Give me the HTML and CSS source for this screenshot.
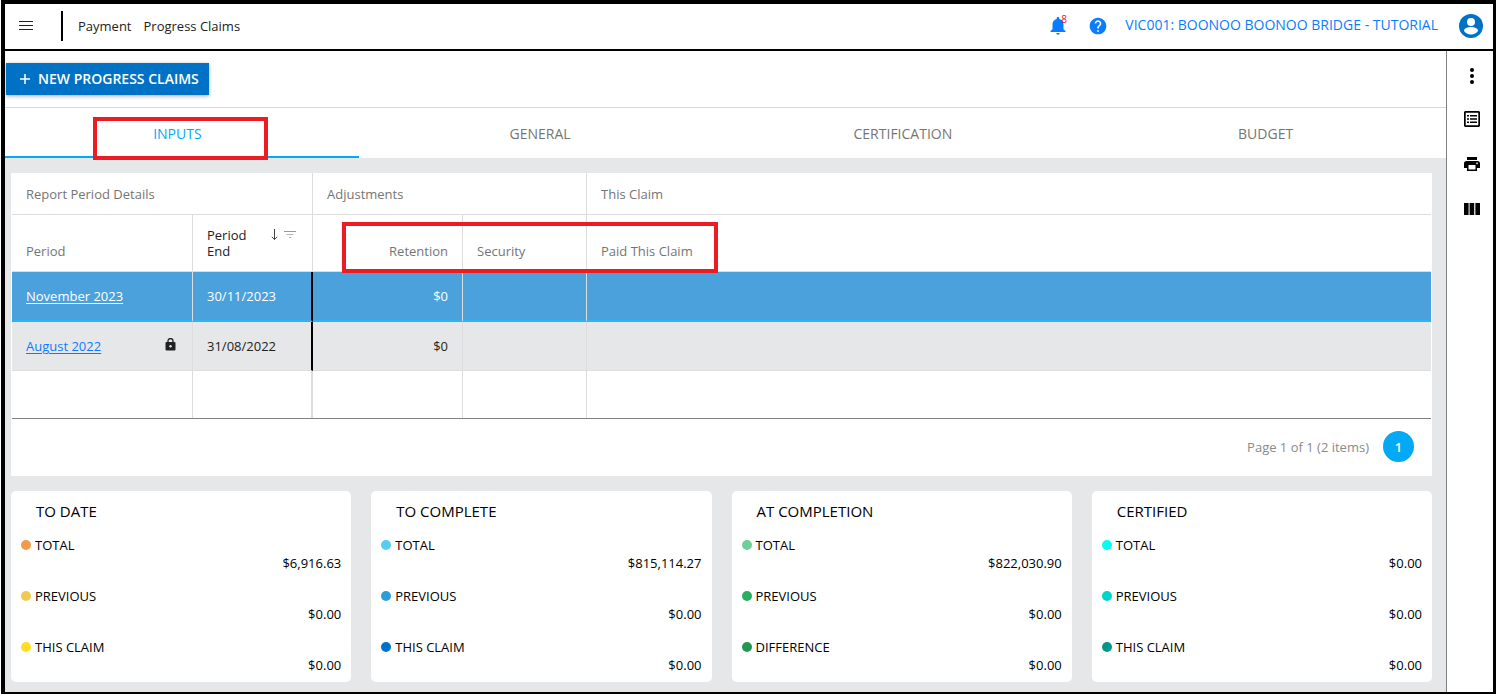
FILE: index.html
```html
<!DOCTYPE html>
<html lang="en">
    <head>
        <meta charset="utf-8">
        <title>Progress Claims</title>
        <link rel="stylesheet" href="styles.css">
    </head>
    <body>
        <div id="app">
            <header class="header">
                <button class="icon-button menu" aria-label="Menu">
                    <svg width="14" height="10" viewBox="0 0 14 10" stroke="#222"><path d="M0 .5h14M0 4.500h14M0 8.500h14"/></svg>
                </button>
                <nav class="crumbs">
                    <a href="#">Payment</a>
                    <a href="#">Progress Claims</a>
                </nav>
                <button class="icon-button bell" aria-label="Notifications">
                    <svg width="16" height="18" viewBox="0 0 16 18" fill="#0a7cff"><path d="M8 0c-.8 0-1.300.500-1.300 1.300v.6C4 2.500 2.500 4.600 2.500 7.200v5L.5 14v1h15v-1l-2-1.800v-5c0-2.600-1.500-4.700-4.200-5.300v-.6C9.300.500 8.800 0 8 0zM6.300 16c0 1 .8 1.700 1.700 1.700s1.700-.7 1.700-1.700z"/></svg>
                    <span class="badge">8</span>
                </button>
                <button class="icon-button help" aria-label="Help">
                    <svg width="20" height="20" viewBox="0 0 24 24" fill="#0a7cff"><path d="M12 2C6.480 2 2 6.480 2 12s4.480 10 10 10 10-4.480 10-10S17.520 2 12 2zm1 17h-2v-2h2v2zm2.070-7.750l-.9.920C13.450 12.900 13 13.500 13 15h-2v-.5c0-1.100.45-2.100 1.170-2.830l1.240-1.260c.37-.36.59-.86.590-1.410 0-1.100-.9-2-2-2s-2 .9-2 2H8c0-2.210 1.790-4 4-4s4 1.790 4 4c0 .88-.36 1.680-.93 2.250z"/></svg>
                </button>
                <a class="project" href="#">VIC001: BOONOO BOONOO BRIDGE - TUTORIAL</a>
                <button class="icon-button user" aria-label="Account">
                    <svg width="24" height="24" viewBox="0 0 24 24"><circle cx="12" cy="12" r="12" fill="#0072c6"/><circle cx="12" cy="8" r="4" fill="#fff"/><path d="M5 17c0-3 4-4 7-4s7 1 7 4c-1.500 2.200-4 3.500-7 3.500S6.500 19.200 5 17z" fill="#fff"/></svg>
                </button>
            </header>
            <div class="body">
                <main class="main">
                    <div class="toolbar">
                        <button class="new-claim">
                            <svg width="10" height="10" viewBox="0 0 10 10" stroke="#fff" stroke-width="1.500"><path d="M5 0v10M0 5h10"/></svg>
                            NEW PROGRESS CLAIMS
                        </button>
                    </div>
                    <div class="tabs" role="tablist">
                        <button class="tab active" role="tab" aria-selected="true">INPUTS<span class="mark mark-tab"></span></button>
                        <button class="tab" role="tab">GENERAL</button>
                        <button class="tab" role="tab">CERTIFICATION</button>
                        <button class="tab" role="tab">BUDGET</button>
                    </div>
                    <div class="content">
                        <section class="grid">
                            <table>
                                <colgroup>
                                    <col class="col-period">
                                    <col class="col-end">
                                    <col class="col-retention">
                                    <col class="col-security">
                                    <col>
                                </colgroup>
                                <thead>
                                    <tr class="bands">
                                        <th colspan="2">Report Period Details</th>
                                        <th colspan="2">Adjustments</th>
                                        <th>This Claim</th>
                                    </tr>
                                    <tr class="columns">
                                        <th>Period</th>
                                        <th class="sorted">
                                            <div class="sort-head">
                                                <span>Period End</span>
                                                <svg width="8" height="12" viewBox="0 0 8 12" fill="none" stroke="#444"><path d="M3.500 0v10.500M.8 7.800l2.700 2.700 2.700-2.700"/></svg>
                                                <svg width="12" height="8" viewBox="0 0 12 8"><path d="M0 .5h12" stroke="#999"/><path d="M2.500 3.500h7M5 6.500h2" stroke="#b5b5b5"/></svg>
                                            </div>
                                        </th>
                                        <th class="num">Retention</th>
                                        <th>Security</th>
                                        <th>Paid This Claim</th>
                                    </tr>
                                </thead>
                                <tbody>
                                    <tr class="selected">
                                        <td><a href="#">November 2023</a></td>
                                        <td class="fixed">30/11/2023</td>
                                        <td class="num">$0</td>
                                        <td></td>
                                        <td></td>
                                    </tr>
                                    <tr class="locked">
                                        <td>
                                            <div class="period">
                                                <a href="#">August 2022</a>
                                                <svg width="13" height="14" viewBox="0 0 13 14"><path d="M3 5V3a2.500 2.500 0 0 1 5 0v2" fill="none" stroke="#222" stroke-width="1.300"/><rect x=".5" y="4" width="10" height="8.500" rx="1" fill="#222"/><circle cx="5.500" cy="8.200" r="1.200" fill="#e6e7e9"/></svg>
                                            </div>
                                        </td>
                                        <td class="fixed">31/08/2022</td>
                                        <td class="num">$0</td>
                                        <td></td>
                                        <td></td>
                                    </tr>
                                    <tr class="empty">
                                        <td></td>
                                        <td class="fixed"></td>
                                        <td></td>
                                        <td></td>
                                        <td></td>
                                    </tr>
                                </tbody>
                            </table>
                            <div class="pager">
                                <span>Page 1 of 1 (2 items)</span>
                                <button class="page">1</button>
                            </div>
                            <span class="mark mark-columns"></span>
                        </section>
                        <div class="cards">
                            <section class="card">
                                <h2>TO DATE</h2>
                                <dl>
                                    <dt class="orange">TOTAL</dt><dd>$6,916.63</dd>
                                    <dt class="amber">PREVIOUS</dt><dd>$0.00</dd>
                                    <dt class="yellow">THIS CLAIM</dt><dd>$0.00</dd>
                                </dl>
                            </section>
                            <section class="card">
                                <h2>TO COMPLETE</h2>
                                <dl>
                                    <dt class="sky">TOTAL</dt><dd>$815,114.27</dd>
                                    <dt class="azure">PREVIOUS</dt><dd>$0.00</dd>
                                    <dt class="blue">THIS CLAIM</dt><dd>$0.00</dd>
                                </dl>
                            </section>
                            <section class="card">
                                <h2>AT COMPLETION</h2>
                                <dl>
                                    <dt class="mint">TOTAL</dt><dd>$822,030.90</dd>
                                    <dt class="green">PREVIOUS</dt><dd>$0.00</dd>
                                    <dt class="forest">DIFFERENCE</dt><dd>$0.00</dd>
                                </dl>
                            </section>
                            <section class="card">
                                <h2>CERTIFIED</h2>
                                <dl>
                                    <dt class="cyan">TOTAL</dt><dd>$0.00</dd>
                                    <dt class="turquoise">PREVIOUS</dt><dd>$0.00</dd>
                                    <dt class="teal">THIS CLAIM</dt><dd>$0.00</dd>
                                </dl>
                            </section>
                        </div>
                    </div>
                </main>
                <aside class="side">
                    <button class="icon-button" aria-label="More">
                        <svg width="16" height="20" viewBox="0 0 16 20"><circle cx="8" cy="6" r="2"/><circle cx="8" cy="12" r="2"/><circle cx="8" cy="18" r="2"/></svg>
                    </button>
                    <button class="icon-button" aria-label="Details">
                        <svg width="16" height="16" viewBox="0 0 16 16"><path d="M1 0h14l1 1v14l-1 1H1l-1-1V1zM1.700 1.700v12.600h12.600V1.700zM3 4h2v1.500H3zM6 4h7v1.500H6zM3 7.200h2v1.500H3zM6 7.200h7v1.500H6zM3 10.500h2V12H3zM6 10.500h7V12H6z" fill-rule="evenodd"/></svg>
                    </button>
                    <button class="icon-button" aria-label="Print">
                        <svg width="16" height="14" viewBox="0 0 16 14"><path d="M3 0h10v3H3zM2.500 4h11A2.500 2.500 0 0 1 16 6.500V11h-3v3H3v-3H0V6.500A2.500 2.500 0 0 1 2.500 4zM4.500 8v4.500h7V8zM13 5.500a.8.800 0 1 0 .01 0z" fill-rule="evenodd"/></svg>
                    </button>
                    <button class="icon-button" aria-label="Columns">
                        <svg width="16" height="12" viewBox="0 0 16 12"><path d="M0 0h4.600v12H0zM5.600 0h4.600v12H5.600zM11.400 0H16v12h-4.600z"/></svg>
                    </button>
                </aside>
            </div>
        </div>
    </body>
</html>
```
FILE: styles.css
```css
* {
    box-sizing: border-box;
}

body {
    margin: 0;
    background-color: #fff;
    color: #222;
    font-family: "Segoe UI", "Open Sans", "Noto Sans", sans-serif;
    font-size: 13px;
    line-height: 16px;
}

button {
    font: inherit;
    border: none;
    background: none;
    padding: 0;
    cursor: pointer;
}

#app {
    display: flex;
    flex-direction: column;
    min-height: 100vh;
    margin-left: 1px;
    border: solid #000;
    border-width: 4px 3px 2px 4px;
}

svg {
    display: block;
}

.header {
    display: flex;
    align-items: center;
    height: 47px;
    padding: 0 10px 2px 14px;
    border-bottom: 2px solid #000;
}

.crumbs {
    display: flex;
    align-items: center;
    gap: 12px;
    height: 30px;
    margin-left: 28px;
    margin-right: auto;
    padding-left: 15px;
    border-left: 2px solid #000;
    font-weight: 500;
}

.crumbs a {
    color: #222;
    text-decoration: none;
}

.bell {
    position: relative;
    margin-right: 22px;
}

.badge {
    position: absolute;
    left: 11px;
    top: -4px;
    color: #e11;
    font-size: 10px;
    line-height: 12px;
}

.project {
    margin: 0 21px 0 17px;
    padding-bottom: 2px;
    color: #0a7cff;
    font-size: 14px;
    font-weight: 500;
    text-decoration: none;
}

.body {
    display: flex;
    flex: 1;
}

.main {
    display: flex;
    flex-direction: column;
    flex: 1;
    min-width: 0;
    overflow: hidden;
}

.toolbar {
    height: 57px;
    padding: 12px 1px;
    border-bottom: 1px solid #d8d8d8;
}

.new-claim {
    display: flex;
    align-items: center;
    gap: 8px;
    height: 32px;
    padding: 0 10px 0 14px;
    background-color: #0072c6;
    color: #fff;
    font-size: 14px;
    font-weight: 600;
    box-shadow: 0 1px 4px rgba(0, 0, 0, 0.35);
}

.tabs {
    display: flex;
    margin: 0 -1px 0 -9px;
}

.tab {
    position: relative;
    flex: 1;
    height: 50px;
    padding-top: 3px;
    color: #757575;
    font-size: 14px;
    font-weight: 500;
    border-bottom: 2px solid transparent;
}

.tab.active {
    color: #03a9f4;
    border-bottom-color: #03a9f4;
}

/* red highlight boxes */
.mark {
    position: absolute;
    border: 4px solid #ed1c24;
    pointer-events: none;
}

.mark-tab {
    left: 97px;
    top: 9px;
    width: 175px;
    height: 43px;
}

.mark-columns {
    left: 331px;
    top: 49px;
    width: 376px;
    height: 51px;
}

.content {
    flex: 1;
    padding: 15px 14px 10px 6px;
    background-color: #e6e7e9;
}

.grid {
    position: relative;
    padding: 0 1px;
    background-color: #fff;
}

table {
    width: 100%;
    table-layout: fixed;
    border-spacing: 0;
    border-bottom: 1px solid #808080;
}

.col-period {
    width: 181px;
}

.col-end {
    width: 120px;
}

.col-retention {
    width: 150px;
}

.col-security {
    width: 124px;
}

th,
td {
    padding: 0 14px;
    border-right: 1px solid #ddd;
    border-bottom: 1px solid #ddd;
    text-align: left;
}

th {
    color: #757575;
    font-weight: 500;
}

th:last-child,
td:last-child {
    border-right: none;
}

.bands th {
    height: 42px;
}

.columns th {
    height: 57px;
    padding-bottom: 12px;
    vertical-align: bottom;
}

.columns .sorted {
    color: #222;
}

.sort-head {
    display: flex;
    gap: 5px;
}

.sort-head span {
    width: 59px;
}

.sort-head svg {
    margin-top: 2px;
}

.sort-head svg:last-child {
    margin-top: 4px;
}

.num,
.columns .num {
    text-align: right;
}

td {
    height: 49px;
}

td a {
    color: #0a7cff;
    text-underline-offset: 2px;
}

.selected td {
    height: 50px;
    background-color: #4ba1dc;
    color: #fff;
    border-bottom: 2px solid #29b6f6;
}

.selected a {
    color: #fff;
}

.locked td {
    background-color: #e6e7e9;
}

td.fixed {
    border-right: 2px solid #000;
}

.period {
    display: flex;
    justify-content: space-between;
    align-items: flex-start;
}

.empty td {
    height: 47px;
    border-bottom: none;
}

.empty td.fixed {
    border-right-color: #ddd;
}

.pager {
    display: flex;
    align-items: center;
    justify-content: flex-end;
    gap: 14px;
    height: 57px;
    padding: 0 17px 2px 0;
    color: #8a8a8a;
}

.page {
    width: 31px;
    height: 31px;
    border-radius: 50%;
    background-color: #03a9f4;
    color: #fff;
    font-weight: 600;
}

.cards {
    display: grid;
    grid-template-columns: repeat(4, 1fr);
    gap: 20px;
    margin-top: 15px;
}

.card {
    padding: 10px 10px 0;
    height: 191px;
    border-radius: 5px;
    background-color: #fff;
    color: #000;
}

.card h2 {
    margin: 0 0 14px 15px;
    font-size: 15px;
    line-height: 20px;
    font-weight: 400;
}

.card dl {
    margin: 0;
}

.card dt {
    display: flex;
    align-items: center;
    gap: 4px;
    height: 20px;
}

.card dt::before {
    content: "";
    width: 10px;
    height: 10px;
    border-radius: 50%;
    background-color: currentColor;
}

.card dd {
    margin: 0 0 15px;
    line-height: 16px;
    text-align: right;
}

.card .orange::before { background-color: #f2994a; }
.card .amber::before { background-color: #f2c94c; }
.card .yellow::before { background-color: #ffdd24; }
.card .sky::before { background-color: #56ccf2; }
.card .azure::before { background-color: #2d9cdb; }
.card .blue::before { background-color: #0072c6; }
.card .mint::before { background-color: #6fcf97; }
.card .green::before { background-color: #27ae60; }
.card .forest::before { background-color: #219653; }
.card .cyan::before { background-color: #00fff0; }
.card .turquoise::before { background-color: #00d5cc; }
.card .teal::before { background-color: #009688; }

.side {
    display: flex;
    flex-direction: column;
    align-items: center;
    gap: 21px;
    width: 47px;
    padding: 11px 0 0 4px;
    border-left: 1px solid #808080;
}

.side .icon-button {
    display: flex;
    align-items: center;
    justify-content: center;
    width: 24px;
    height: 24px;
}
```
